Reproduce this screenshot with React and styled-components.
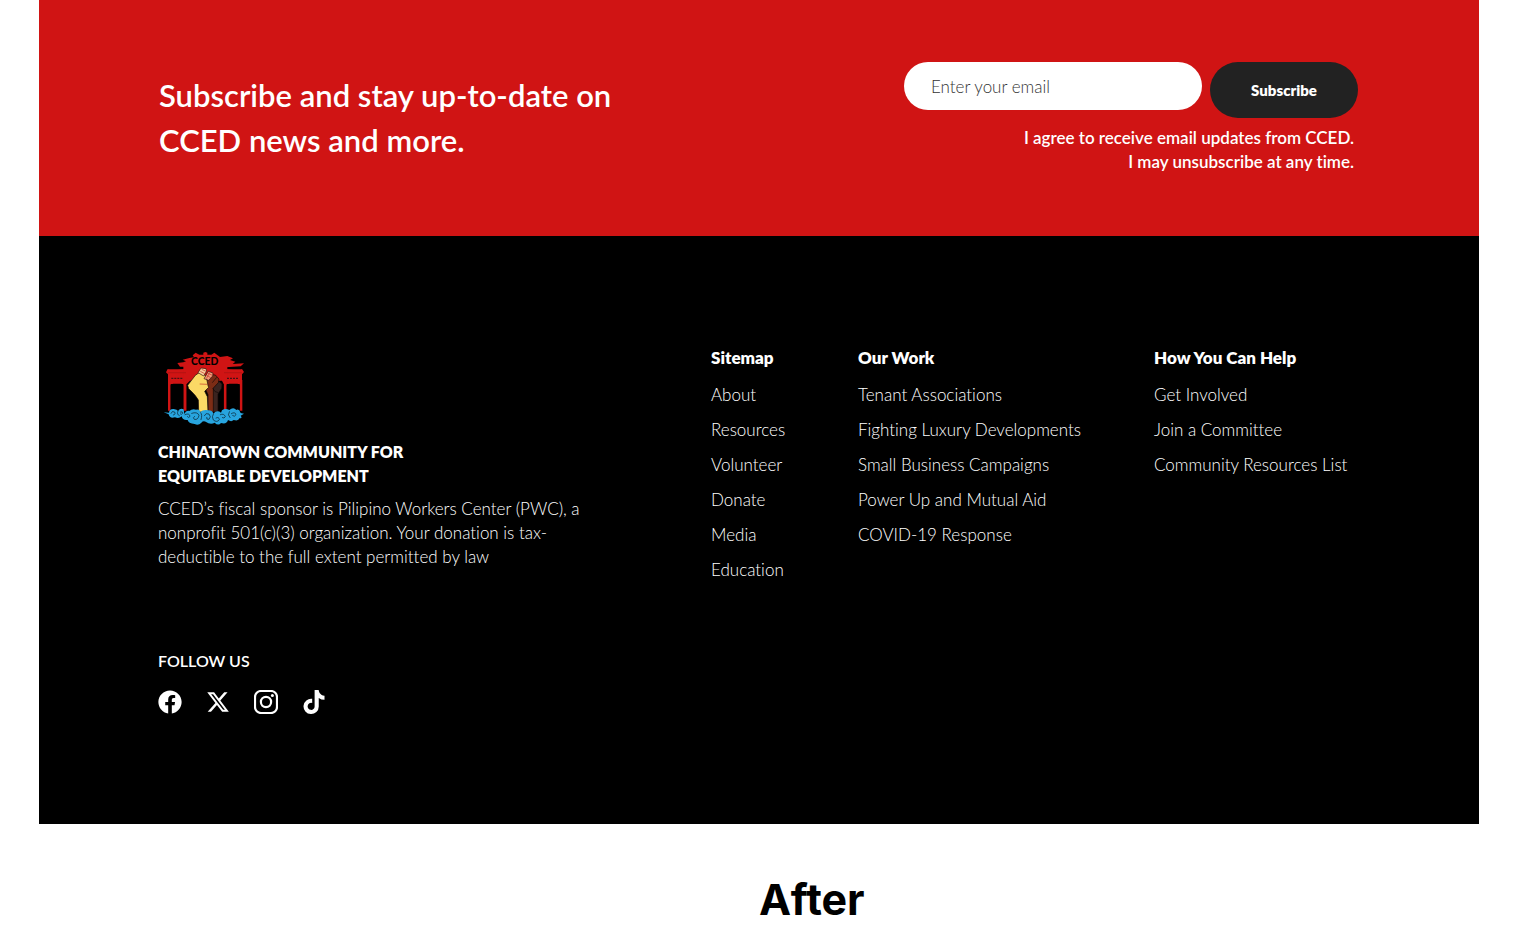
import React, { useState } from "react";
import styled, { createGlobalStyle } from "styled-components";
import { FaFacebook, FaTiktok } from "react-icons/fa";

const columns = [
  {
    title: "Sitemap",
    links: ["About", "Resources", "Volunteer", "Donate", "Media", "Education"],
  },
  {
    title: "Our Work",
    links: [
      "Tenant Associations",
      "Fighting Luxury Developments",
      "Small Business Campaigns",
      "Power Up and Mutual Aid",
      "COVID-19 Response",
    ],
  },
  {
    title: "How You Can Help",
    links: ["Get Involved", "Join a Committee", "Community Resources List"],
  },
];

function Logo() {
  return (
    <LogoArt viewBox="24 18 276 252" role="img" aria-label="CCED logo">
      {/* gate roof */}
      <path
        fill="#d01414"
        d="M128 46 L137 38 L148 44 L160 44 L160 38 L166 36 L172 38 L172 44 L184 44 L193 38 L203 46 L210 51 L232 48 L249 55 L240 60 L256 65 L248 72 L282 70 L272 79 L226 82 L224 87 L270 92 L276 87 L282 96 L276 103 L276 122 L222 122 L216 110 L112 110 L108 122 L54 122 L54 103 L48 97 L53 87 L60 92 L108 87 L106 80 L90 80 L82 69 L100 67 L108 64 L98 59 L118 54 L132 52 Z"
      />
      <path fill="#d01414" d="M54 88 H276 V132 H54 Z" />
      <path fill="#d01414" d="M100 78 H232 V132 H100 Z" />
      {/* pillars */}
      <path
        fill="#d01414"
        d="M54 120 H62 V212 H54 Z M100 120 H110 V212 H100 Z M221 120 H230 V212 H221 Z M269 120 H277 V212 H269 Z"
      />
      <path
        fill="#000"
        d="M62 136 Q64 131 70 131 H94 Q100 131 100 137 V214 H62 Z M230 136 Q232 131 238 131 H262 Q269 131 269 137 V214 H230 Z M110 132 L120 122 H216 L221 132 V214 H110 Z"
      />
      <path
        stroke="#471014"
        strokeWidth="4"
        strokeDasharray="6 3"
        d="M64 115 H100 M231 115 H267"
      />
      <path stroke="#a81212" strokeWidth="2" d="M54 98 H108 M222 98 H276" />
      <LogoText x="164" y="76" textAnchor="middle">
        CCED
      </LogoText>
      {/* dark fist */}
      <path
        fill="#3a2420"
        stroke="#120806"
        strokeWidth="2"
        d="M188 143 L207 124 L216 132 L215 145 L204 162 L204 216 L180 216 Z"
      />
      {/* brown fist */}
      <path
        fill="#7c2c15"
        stroke="#120806"
        strokeWidth="2"
        d="M164 122 L186 104 L196 105 L207 117 L205 128 L190 144 L190 216 L174 216 L174 164 L166 146 Z"
      />
      <path
        fill="none"
        stroke="#120806"
        strokeWidth="2"
        d="M187 128 L200 112 M188 145 Q194 158 205 158"
      />
      {/* light fist */}
      <path
        fill="#fbd965"
        stroke="#120806"
        strokeWidth="2"
        d="M146 216 L145 180 Q138 166 116 146 L113 136 L136 106 L150 96 L168 108 L172 126 L174 137 L176 142 L164 154 L172 170 L174 216 Z"
      />
      <path
        fill="#f7cf9c"
        stroke="#31100a"
        strokeWidth="2"
        d="M144 98 L153 84 L168 86 L170 93 L161 108 Z"
      />
      <path
        fill="#f09b79"
        stroke="#31100a"
        strokeWidth="2"
        d="M162 116 L175 94 L189 99 L188 108 L176 121 Z"
      />
      <path
        fill="none"
        stroke="#c43428"
        strokeWidth="2"
        d="M151 94 L164 101 M155 88 L168 94 M170 106 L182 113 M174 100 L187 106 M169 116 L179 98 M149 132 L172 133"
      />
      {/* clouds */}
      <path
        fill="#28a5df"
        d="M41 217 L57 218 Q58 206 71 207 Q82 208 84 213 Q91 203 101 208 L103 222 Q108 210 118 213 Q126 206 138 209 Q149 207 151 216 Q160 207 175 211 Q187 211 190 221 Q201 208 213 218 L216 211 Q226 203 238 210 Q250 200 259 210 Q267 205 272 219 L282 221 L272 227 Q279 235 268 235 Q266 244 251 240 Q244 247 234 240 Q230 254 213 249 Q205 259 194 248 Q181 255 167 245 Q159 242 154 248 Q145 258 134 252 Q115 251 113 240 Q98 242 95 229 Q87 237 75 232 Q59 237 56 223 Z"
      />
      <path
        fill="none"
        stroke="#071a24"
        strokeWidth="2"
        strokeLinecap="round"
        d="M63 220 Q66 211 74 216 Q78 224 70 225 M84 213 Q79 224 88 227 M91 216 Q99 213 98 220 Q95 225 91 222 M105 224 Q118 218 120 229 Q116 236 112 230 M125 220 Q142 214 147 226 Q144 241 133 238 Q126 233 134 229 M152 218 Q158 224 153 239 M163 227 Q167 217 177 222 Q185 231 177 238 Q168 240 170 232 M190 222 Q184 230 190 240 Q201 249 208 239 Q207 229 198 234 M211 224 Q222 219 226 230 Q223 237 217 233 M238 215 Q231 225 240 233 M244 221 Q255 214 258 224 Q254 232 248 227"
      />
    </LogoArt>
  );
}

function XIcon() {
  return (
    <svg viewBox="0 0 24 24" width="24" height="24" fill="#fff">
      <path d="M18.244 2.25h3.308l-7.227 8.26 8.502 11.24H16.17l-5.214-6.817L4.99 21.75H1.68l7.73-8.835L1.254 2.25H8.08l4.713 6.231zm-1.161 17.52h1.833L7.084 4.126H5.117z" />
    </svg>
  );
}

function InstagramIcon() {
  return (
    <svg viewBox="0 0 24 24" width="24" height="24" fill="none" stroke="#fff">
      <rect x="1" y="1" width="22" height="22" rx="6" strokeWidth="2.2" />
      <circle cx="12" cy="12" r="5.1" strokeWidth="2.2" />
      <circle cx="18.4" cy="5.6" r="1.5" fill="#fff" stroke="none" />
    </svg>
  );
}

const socials = [
  { name: "Facebook", icon: <FaFacebook size={24} /> },
  { name: "X", icon: <XIcon /> },
  { name: "Instagram", icon: <InstagramIcon /> },
  { name: "TikTok", icon: <FaTiktok size={24} /> },
];

export default function App() {
  const [email, setEmail] = useState("");

  const handleSubmit = (event) => {
    event.preventDefault();
    setEmail("");
  };

  return (
    <>
      <GlobalStyle />
      <Page>
        <Newsletter>
          <h2>
            Subscribe and stay up-to-date on
            <br />
            CCED news and more.
          </h2>
          <form onSubmit={handleSubmit}>
            <Fields>
              <EmailInput
                type="email"
                aria-label="Enter your email"
                placeholder="Enter your email"
                value={email}
                onChange={(e) => setEmail(e.target.value)}
              />
              <SubscribeButton type="submit">Subscribe</SubscribeButton>
            </Fields>
            <Consent>
              I agree to receive email updates from CCED.
              <br />I may unsubscribe at any time.
            </Consent>
          </form>
        </Newsletter>
        <Footer>
          <About>
            <Logo />
            <h3>
              Chinatown Community for
              <br />
              Equitable Development
            </h3>
            <p>
              CCED’s fiscal sponsor is Pilipino Workers Center (PWC), a
              <br />
              nonprofit 501(c)(3) organization. Your donation is tax-
              <br />
              deductible to the full extent permitted by law
            </p>
            <h4>Follow us</h4>
            <Socials>
              {socials.map((social) => (
                <a key={social.name} href="#" aria-label={social.name}>
                  {social.icon}
                </a>
              ))}
            </Socials>
          </About>
          {columns.map((column) => (
            <LinkColumn key={column.title}>
              <h3>{column.title}</h3>
              <ul>
                {column.links.map((link) => (
                  <li key={link}>
                    <a href="#">{link}</a>
                  </li>
                ))}
              </ul>
            </LinkColumn>
          ))}
        </Footer>
        <Caption>After</Caption>
      </Page>
    </>
  );
}

const GlobalStyle = createGlobalStyle`
  * {
    box-sizing: border-box;
  }
  body {
    margin: 0;
    background-color: #fff;
    font-family: Lato, "Open Sans", sans-serif;
    font-size: 17px;
    font-weight: 300;
    line-height: 24px;
    font-variant-ligatures: none;
  }
  h1, h2, h3, h4, p, ul {
    margin: 0;
    padding: 0;
  }
  a {
    color: inherit;
    text-decoration: none;
  }
`;

const Page = styled.div`
  padding: 0 39px;
`;

const Newsletter = styled.section`
  display: flex;
  align-items: center;
  justify-content: space-between;
  padding: 62px 121px 62px 120px;
  background-color: #d01414;
  color: #fff;
  h2 {
    font-size: 31px;
    line-height: 45px;
    font-weight: 600;
  }
`;

const Fields = styled.div`
  display: flex;
  align-items: flex-start;
  gap: 8px;
`;

const EmailInput = styled.input`
  width: 298px;
  height: 48px;
  padding: 0 27px;
  border: none;
  border-radius: 24px;
  background-color: #fff;
  color: #222;
  font: inherit;
  &::placeholder {
    color: #333;
    opacity: 1;
  }
`;

const SubscribeButton = styled.button`
  width: 148px;
  height: 56px;
  border: none;
  border-radius: 28px;
  background-color: #222;
  color: #fff;
  font-family: inherit;
  font-size: 15px;
  font-weight: 800;
  cursor: pointer;
`;

const Consent = styled.p`
  margin-top: 8px;
  padding-right: 4px;
  text-align: right;
  font-weight: 600;
`;

const Footer = styled.footer`
  display: grid;
  grid-template-columns: 553fr 147fr 296fr 206fr;
  padding: 110px 119px;
  background-color: #000;
  color: #fff;
`;

const About = styled.div`
  h3 {
    margin-top: 10px;
    font-size: 16px;
    font-weight: 800;
    text-transform: uppercase;
  }
  p {
    margin-top: 9px;
  }
  h4 {
    margin-top: 80px;
    font-size: 16px;
    font-weight: 600;
    text-transform: uppercase;
  }
`;

const LogoArt = styled.svg`
  display: block;
  width: 92px;
  height: 84px;
`;

const LogoText = styled.text`
  fill: #000;
  font-size: 31px;
  font-weight: 900;
`;

const Socials = styled.div`
  display: flex;
  gap: 24px;
  margin-top: 17px;
  a {
    display: flex;
    align-items: center;
    justify-content: center;
    width: 24px;
    height: 24px;
  }
`;

const LinkColumn = styled.nav`
  white-space: nowrap;
  h3 {
    font-size: 17px;
    font-weight: 800;
  }
  ul {
    display: flex;
    flex-direction: column;
    gap: 11px;
    margin-top: 13px;
    list-style: none;
  }
`;

const Caption = styled.h1`
  padding: 49px 0 24px 50%;
  font-family: Inter, sans-serif;
  font-size: 43px;
  line-height: 53px;
  font-weight: 700;
`;
